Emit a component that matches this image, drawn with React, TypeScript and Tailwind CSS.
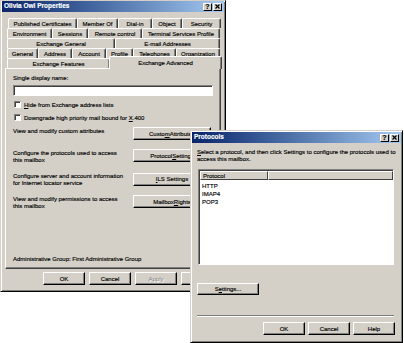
import React from "react";

const GRAY = "bg-[#d4d0c8]";

function Btn({
  className = "",
  children,
  disabled = false,
}: {
  className?: string;
  children?: React.ReactNode;
  disabled?: boolean;
}) {
  return (
    <div
      className={`flex items-center justify-center shrink-0 ${GRAY} border border-t-white border-l-white border-r-black border-b-black shadow-[inset_-1px_-1px_#808080] text-[6px] leading-none whitespace-nowrap overflow-hidden ${
        disabled ? "text-[#808080] [text-shadow:1px_1px_#ffffff] [-webkit-text-stroke:0px]" : "text-black"
      } ${className}`}
    >
      {children}
    </div>
  );
}

function U({ children }: { children: React.ReactNode }) {
  return <span className="underline underline-offset-[1px]">{children}</span>;
}

function TitleBar({ title }: { title: string }) {
  return (
    <div className="mx-[1px] h-[11px] shrink-0 flex items-center justify-between bg-linear-to-r from-[#0a246a] to-[#a6caf0] pl-[2px] pr-[2px]">
      <span className="text-white font-bold text-[6.5px] leading-none [-webkit-text-stroke:0.15px_#ffffff]">{title}</span>
      <div className="flex gap-[1px]">
        <div className={`w-[9px] h-[8px] ${GRAY} border border-t-white border-l-white border-r-black border-b-black flex items-center justify-center text-[7px] font-bold leading-none text-black`}>
          ?
        </div>
        <div className={`w-[9px] h-[8px] ${GRAY} border border-t-white border-l-white border-r-black border-b-black flex items-center justify-center`}>
          <svg width="5" height="5" viewBox="0 0 5 5">
            <path d="M0.5 0.5 L4.5 4.5 M4.5 0.5 L0.5 4.5" stroke="black" strokeWidth="1.2" />
          </svg>
        </div>
      </div>
    </div>
  );
}

function Tab({ className = "", children }: { className?: string; children: React.ReactNode }) {
  return (
    <div
      className={`h-[10px] shrink-0 flex items-center justify-center border-t border-l border-r border-t-white border-l-white border-r-[#404040] shadow-[inset_-1px_0_#808080] rounded-t-[2px] text-[6px] leading-none whitespace-nowrap text-black ${className}`}
    >
      {children}
    </div>
  );
}

function CheckBox() {
  return (
    <div className="w-[7px] h-[7px] shrink-0 bg-white border border-t-[#808080] border-l-[#808080] border-r-white border-b-white shadow-[inset_1px_1px_#404040]" />
  );
}

function ActionRow({ lines, button, className = "" }: { lines: React.ReactNode[]; button: React.ReactNode; className?: string }) {
  return (
    <div className={`flex items-start ${className}`}>
      <div className="w-[120px] flex flex-col text-[6px] leading-[7px] pt-[0.5px]">
        {lines.map((l, i) => (
          <div key={i}>{l}</div>
        ))}
      </div>
      <Btn className="w-[78px] h-[13px]">{button}</Btn>
    </div>
  );
}

export default function App() {
  return (
    <div className="relative w-[404px] h-[343px] bg-white overflow-hidden font-['Liberation_Sans',Arial,sans-serif] text-black [-webkit-text-stroke:0.15px_#000000]">
      {/* Properties window */}
      <div className={`absolute left-0 top-0 w-[226px] h-[292px] ${GRAY} border border-t-[#d4d0c8] border-l-[#d4d0c8] border-r-black border-b-black shadow-[inset_1px_1px_#ffffff,inset_-1px_-1px_#808080] flex flex-col`}>
        <TitleBar title="Olivia Owl Properties" />

        <div className="mt-[6px] flex flex-col">
          <div className="flex ml-[7px]">
            <Tab className="w-[69px]">Published Certificates</Tab>
            <Tab className="w-[41px]">Member Of</Tab>
            <Tab className="w-[34px]">Dial-in</Tab>
            <Tab className="w-[30px]">Object</Tab>
            <Tab className="w-[39px]">Security</Tab>
          </div>
          <div className="flex ml-[6px]">
            <Tab className="w-[45px]">Environment</Tab>
            <Tab className="w-[36px]">Sessions</Tab>
            <Tab className="w-[54px]">Remote control</Tab>
            <Tab className="w-[78px]">Terminal Services Profile</Tab>
          </div>
          <div className="flex ml-[6px]">
            <Tab className="w-[108px]">Exchange General</Tab>
            <Tab className="w-[105px]">E-mail Addresses</Tab>
          </div>
          <div className="flex ml-[6px]">
            <Tab className="w-[31px]">General</Tab>
            <Tab className="w-[34px]">Address</Tab>
            <Tab className="w-[34px]">Account</Tab>
            <Tab className="w-[27px]">Profile</Tab>
            <Tab className="w-[43px]">Telephones</Tab>
            <Tab className="w-[44px]">Organization</Tab>
          </div>
          <div className="flex items-start ml-[6px] h-[10px]">
            <Tab className="w-[103px]">Exchange Features</Tab>
            <div className={`relative z-10 -mt-[2px] -ml-[1px] w-[113px] h-[13px] shrink-0 flex items-center justify-center pb-[1px] ${GRAY} border-t border-l border-r border-t-white border-l-white border-r-[#404040] shadow-[inset_-1px_0_#808080] rounded-t-[2px] text-[6px] leading-none whitespace-nowrap`}>
              Exchange Advanced
            </div>
          </div>
        </div>

        {/* panel */}
        <div className="ml-[4px] w-[216px] h-[201px] shrink-0 border border-t-white border-l-white border-r-[#404040] border-b-[#404040] shadow-[inset_-1px_-1px_#808080] flex flex-col pl-[7px]">
          <div className="mt-[6px] text-[6px] leading-[7px]">Single display name:</div>
          <div className="mt-[3px] w-[200px] h-[11px] bg-white border border-t-[#808080] border-l-[#808080] border-r-white border-b-white shadow-[inset_1px_1px_#404040]" />
          <div className="mt-[5px] flex items-center gap-[3px] ml-[1px] text-[6px] leading-none">
            <CheckBox />
            <span>
              <U>H</U>ide from Exchange address lists
            </span>
          </div>
          <div className="mt-[6px] flex items-center gap-[3px] ml-[1px] text-[6px] leading-none">
            <CheckBox />
            <span>
              Downgrade high priority mail bound for <U>X</U>.400
            </span>
          </div>
          <ActionRow
            className="mt-[6px]"
            lines={["View and modify custom attributes"]}
            button={
              <>
                Custo<U>m</U> Attributes
              </>
            }
          />
          <ActionRow
            className="mt-[9px]"
            lines={["Configure the protocols used to access", "this mailbox"]}
            button={
              <>
                Protocol <U>S</U>ettings
              </>
            }
          />
          <ActionRow
            className="mt-[9px]"
            lines={["Configure server and account information", "for Internet locator service"]}
            button={
              <>
                <U>I</U>LS Settings
              </>
            }
          />
          <ActionRow
            className="mt-[8px]"
            lines={["View and modify permissions to access", "this mailbox"]}
            button={
              <>
                Mailbox <U>R</U>ights
              </>
            }
          />
          <div className="flex-1" />
          <div className="mb-[5px] text-[6px] leading-[7px]">Administrative Group: First Administrative Group</div>
        </div>

        <div className="mt-[3px] ml-[42px] flex gap-[4px]">
          <Btn className="w-[42px] h-[13px]">OK</Btn>
          <Btn className="w-[42px] h-[13px]">Cancel</Btn>
          <Btn className="w-[42px] h-[13px]" disabled>
            Apply
          </Btn>
          <Btn className="w-[42px] h-[13px]">Help</Btn>
        </div>
      </div>

      {/* Protocols window */}
      <div className={`absolute left-[190px] top-[130px] w-[213px] h-[213px] ${GRAY} border border-t-[#d4d0c8] border-l-[#d4d0c8] border-r-black border-b-black shadow-[inset_1px_1px_#ffffff,inset_-1px_-1px_#808080] flex flex-col`}>
        <div className="mt-[1px]">
          <TitleBar title="Protocols" />
        </div>
        <div className="flex flex-col pl-[6px]">
          <div className="mt-[6px] text-[6px] leading-[7px]">
            <div>
              <U>S</U>elect a protocol, and then click Settings to configure the protocols used to
            </div>
            <div>access this mailbox.</div>
          </div>
          <div className="mt-[6px] ml-[1px] w-[196px] h-[96px] bg-white border border-t-[#808080] border-l-[#808080] border-r-white border-b-white shadow-[inset_1px_1px_#404040] pl-[1px] pt-[1px] flex flex-col">
            <div className="flex h-[9px] shrink-0">
              <div className={`w-[68px] ${GRAY} border border-t-white border-l-white border-r-[#404040] border-b-[#404040] text-[6px] leading-none flex items-center pl-[2px]`}>
                Protocol
              </div>
              <div className={`flex-1 ${GRAY} border border-t-white border-l-white border-r-[#404040] border-b-[#404040]`} />
            </div>
            <div className="pl-[2px] pt-[2px] text-[6px] leading-[8px]">
              <div>HTTP</div>
              <div>IMAP4</div>
              <div>POP3</div>
            </div>
          </div>
          <Btn className="mt-[18px] w-[62px] h-[12px]">
            <span>
              S<U>e</U>ttings...
            </span>
          </Btn>
          <div className="mt-[20px] w-[197px] border-t border-t-[#808080] border-b border-b-white" />
          <div className="mt-[5px] ml-[66px] flex gap-[3px]">
            <Btn className="w-[42px] h-[13px]">OK</Btn>
            <Btn className="w-[42px] h-[13px]">Cancel</Btn>
            <Btn className="w-[42px] h-[13px]">Help</Btn>
          </div>
        </div>
      </div>
    </div>
  );
}
